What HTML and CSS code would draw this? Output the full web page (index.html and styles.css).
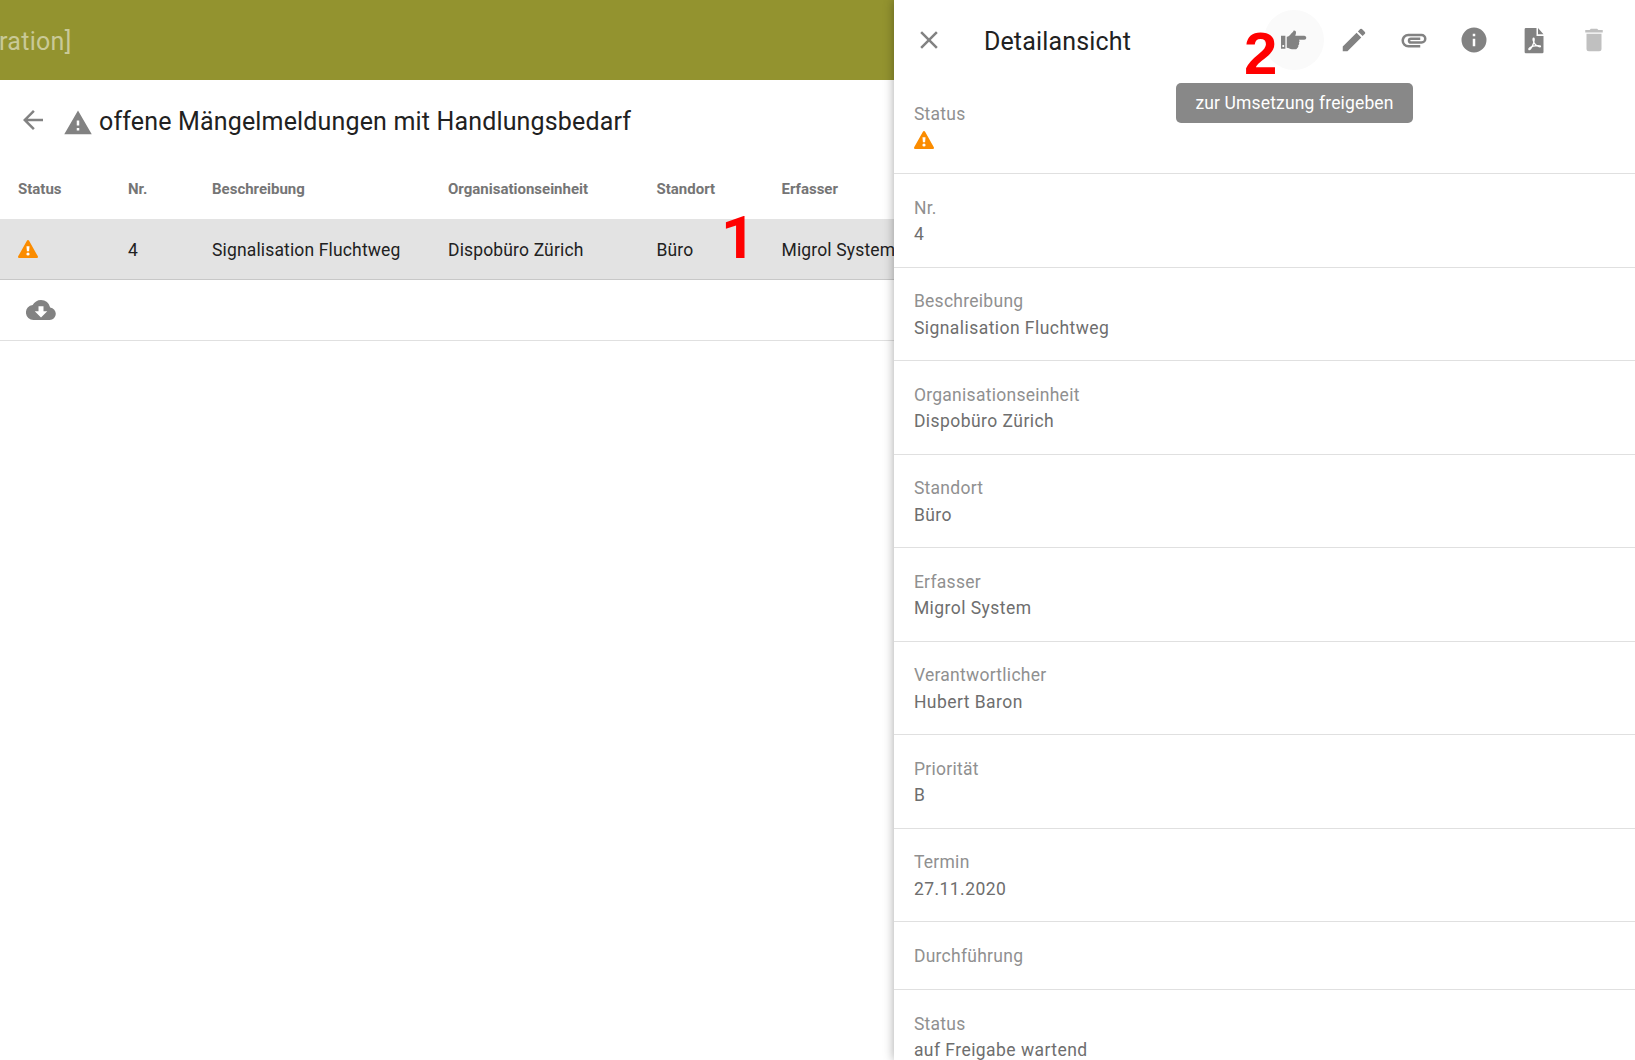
FILE: index.html
```html
<!DOCTYPE html>
<html lang="de">
<head>
    <meta charset="UTF-8">
    <meta name="viewport" content="width=device-width, initial-scale=1.0">
    <title>Detailansicht</title>
    <link rel="stylesheet" href="styles.css">
</head>
<body>
    <main class="list">
        <header class="appbar"><span class="appbar-title">ration]</span></header>

        <div class="list-header">
            <svg class="icon back" viewBox="0 0 24 24"><path d="M20 11H7.83l5.59-5.59L12 4l-8 8 8 8 1.41-1.41L7.83 13H20z"/></svg>
            <svg class="icon alert" viewBox="0 0 24 24"><path d="M13 14h-2v-4h2m0 8h-2v-2h2M1 21h22L12 2z"/></svg>
            <h1><span class="list-title">offene Mängelmeldungen mit Handlungsbedarf</span></h1>
        </div>

        <div class="row head">
            <span>Status</span>
            <span>Nr.</span>
            <span>Beschreibung</span>
            <span>Organisationseinheit</span>
            <span>Standort</span>
            <span>Erfasser</span>
        </div>
        <div class="row selected">
            <svg class="warn" viewBox="0 0 20 18"><path d="M8.9.7a1.3 1.3 0 0 1 2.2 0l8.6 15.4a1.2 1.2 0 0 1-1.1 1.9H1.4a1.2 1.2 0 0 1-1.1-1.9z"/><path class="mark" d="M8.5 6.2h3l-.4 5H8.9z"/><circle class="mark" cx="10" cy="14" r="1.6"/></svg>
            <span>4</span>
            <span>Signalisation Fluchtweg</span>
            <span>Dispobüro Zürich</span>
            <span>Büro</span>
            <span>Migrol System</span>
        </div>
        <div class="export">
            <svg class="icon" viewBox="0 0 24 24"><path d="M17 13l-5 5-5-5h3V9h4v4m5.35-2.97A7.49 7.49 0 0 0 12 4C9.11 4 6.6 5.64 5.35 8.03A6 6 0 0 0 6 20h13a5 5 0 0 0 .35-9.97z"/></svg>
        </div>
    </main>

    <aside class="detail">
        <header class="toolbar">
            <svg class="icon close" viewBox="0 0 24 24"><path d="M19 6.41L17.59 5 12 10.59 6.41 5 5 6.41 10.59 12 5 17.59 6.41 19 12 13.41 17.59 19 19 17.59 13.41 12z"/></svg>
            <h2><span class="detail-title">Detailansicht</span></h2>
            <div class="actions">
                <button class="action active">
                    <svg class="icon" viewBox="0 0 24 24"><path fill-rule="evenodd" d="M1.6 8.5h3.5v10.400H1.6zM2.7 16v1.5h1.4V16zM6.2 9.3c1.6 0 2.4-1 3.4-2.3.9-1.1 1.7-1.2 2-2.4.8-.5 2.2.2 2 1.7-.1.9-.5 1.5-.6 2.2h7.1c2.3 0 2.3 3.2 0 3.2h-4.2c.8.7.7 1.8 0 2.3.5.8.3 1.8-.5 2.2.3.9 0 1.8-.8 2.2-.2.7-.7 1-1.6 1h-2.6c-1.600 0-2.600-1.100-4.200-1.200z"/></svg>
                </button>
                <button class="action">
                    <svg class="icon" viewBox="0 0 24 24"><path d="M3 17.25V21h3.75L17.81 9.94l-3.75-3.75zM20.71 7.04a1 1 0 0 0 0-1.41l-2.34-2.34a1 1 0 0 0-1.41 0l-1.83 1.83 3.75 3.75z"/></svg>
                </button>
                <button class="action">
                    <svg class="icon" viewBox="0 0 24 24"><path d="M2 12.5C2 9.46 4.46 7 7.5 7H18a4 4 0 0 1 0 8H9.5a2.5 2.5 0 0 1 0-5H17v2H9.41c-.55 0-.55 1 0 1H18a2 2 0 0 0 0-4H7.5a3.5 3.5 0 0 0 0 7H17v2H7.5A5.5 5.5 0 0 1 2 12.5z"/></svg>
                </button>
                <button class="action">
                    <svg class="icon" viewBox="0 0 24 24"><path d="M13 9h-2V7h2m0 10h-2v-6h2m-1-9a10 10 0 1 0 0 20 10 10 0 0 0 0-20z"/></svg>
                </button>
                <button class="action">
                    <svg class="icon" viewBox="0 0 24 24"><path d="M4.5 3.4a1 1 0 0 1 1-1H14v6.4h5.6v12.8a1 1 0 0 1-1 1H5.5a1 1 0 0 1-1-1zM15.2 2.4l4.4 4.9h-4.4z"/><path class="swirl" d="M11.7 10.500c-1 0-.4 3 1.3 5 1.3 1.5 4 2.5 4.2 1.7.2-1-3.5-1-5.800-.3-2.200.7-3.900 2-3.500 2.700.7.700 2.200-1.500 3.200-3.700.9-2 1.500-5.300.6-5.400z"/></svg>
                </button>
                <button class="action disabled">
                    <svg class="icon" viewBox="0 0 24 24"><path d="M19 4h-3.5l-1-1h-5l-1 1H5v2h14M6 19a2 2 0 0 0 2 2h8a2 2 0 0 0 2-2V7H6z"/></svg>
                </button>
            </div>
        </header>

        <div class="field">
            <label>Status</label>
            <div class="value"><svg class="warn" viewBox="0 0 20 18"><path d="M8.9.7a1.3 1.3 0 0 1 2.2 0l8.6 15.4a1.2 1.2 0 0 1-1.1 1.9H1.4a1.2 1.2 0 0 1-1.1-1.9z"/><path class="mark" d="M8.5 6.2h3l-.4 5H8.9z"/><circle class="mark" cx="10" cy="14" r="1.6"/></svg></div>
        </div>
        <div class="field"><label>Nr.</label><div class="value">4</div></div>
        <div class="field"><label>Beschreibung</label><div class="value">Signalisation Fluchtweg</div></div>
        <div class="field"><label>Organisationseinheit</label><div class="value">Dispobüro Zürich</div></div>
        <div class="field"><label>Standort</label><div class="value">Büro</div></div>
        <div class="field"><label>Erfasser</label><div class="value">Migrol System</div></div>
        <div class="field"><label>Verantwortlicher</label><div class="value">Hubert Baron</div></div>
        <div class="field"><label>Priorität</label><div class="value">B</div></div>
        <div class="field"><label>Termin</label><div class="value">27.11.2020</div></div>
        <div class="field empty"><label>Durchführung</label></div>
        <div class="field"><label>Status</label><div class="value">auf Freigabe wartend</div></div>
    </aside>

    <div class="tooltip">zur Umsetzung freigeben</div>
    <div class="step step-1">1</div>
    <div class="step step-2">2</div>
</body>
</html>
```
FILE: styles.css
```css
* {
    margin: 0;
    padding: 0;
    box-sizing: border-box;
}

body {
    position: relative;
    display: flex;
    height: 1060px;
    overflow: hidden;
    background-color: #fff;
    color: #212121;
    font-family: Roboto, sans-serif;
    font-size: 17.5px;
}

.icon {
    flex: none;
    width: 30px;
    height: 30px;
    fill: #828282;
}

.list {
    width: 894.4px;
    flex: none;
    overflow: hidden;
}

.appbar {
    display: flex;
    align-items: center;
    height: 80px;
    padding-top: 3px;
    background-color: #93932f;
    color: #c9c997;
    font-size: 25px;
}

.appbar-title {
    margin-left: -1px;
    letter-spacing: 0.3px;
}

.list-header {
    display: flex;
    align-items: center;
    height: 80px;
    padding-left: 18px;
}

.alert {
    margin: 6px 6px 0 15px;
}

h1, h2 {
    padding-top: 3px;
    font-size: 25px;
    font-weight: 400;
    letter-spacing: 0.16px;
    white-space: nowrap;
}

.row {
    display: grid;
    grid-template-columns: 110px 84px 236px 208.5px 125px 200px;
    align-items: center;
    height: 61px;
    padding-top: 1px;
    padding-left: 18px;
    letter-spacing: 0.15px;
    white-space: nowrap;
}

.head {
    height: 59px;
    padding-top: 0;
    padding-bottom: 2px;
    color: #757575;
    font-size: 15px;
    font-weight: 700;
    letter-spacing: 0;
}

.selected {
    background-color: #e3e3e3;
    border-bottom: 1px solid #c8c8c8;
}

.warn {
    display: block;
    width: 20px;
    height: 18px;
    margin-top: -1px;
    fill: #fb8c00;
}

.mark {
    fill: #fff;
}

.export {
    display: flex;
    align-items: center;
    height: 61px;
    padding-left: 25.5px;
    border-bottom: 1px solid #e0e0e0;
}

.detail {
    position: relative;
    flex: 1;
    background-color: #fff;
    box-shadow: 0 0 10px rgba(0, 0, 0, 0.35);
}

.toolbar {
    display: flex;
    align-items: center;
    height: 80.5px;
    padding: 0 11px 0 19.5px;
}

h2 {
    margin-left: 40px;
}

.actions {
    display: flex;
    margin-left: auto;
}

.action {
    display: flex;
    align-items: center;
    justify-content: center;
    width: 60px;
    height: 60px;
    border: none;
    border-radius: 50%;
    background: none;
}

.active {
    background-color: #fafafa;
}

.disabled {
    opacity: 0.5;
}

.swirl {
    fill: none;
    stroke: #fff;
    stroke-width: 1;
}

.field {
    height: 93.5px;
    padding: 20.5px 19.5px 0;
    border-bottom: 1px solid #e0e0e0;
    line-height: 26.5px;
}

.field label {
    display: block;
    color: #909090;
    letter-spacing: 0.27px;
}

.value {
    color: #6e6e6e;
    letter-spacing: 0.45px;
}

.value .warn {
    margin-top: 3.5px;
}

.empty {
    height: 68px;
}

.tooltip {
    position: absolute;
    left: 1176px;
    top: 83px;
    width: 237px;
    height: 40px;
    border-radius: 5px;
    background-color: #888;
    color: #fff;
    line-height: 40px;
    letter-spacing: 0.15px;
    text-align: center;
}

.step {
    position: absolute;
    color: #f00;
    font: bold 60px/60px "Liberation Sans", Arial, sans-serif;
}

.step-1 {
    left: 721px;
    top: 208px;
    font-family: Roboto, sans-serif;
}

.step-2 {
    left: 1244px;
    top: 24px;
}
```
